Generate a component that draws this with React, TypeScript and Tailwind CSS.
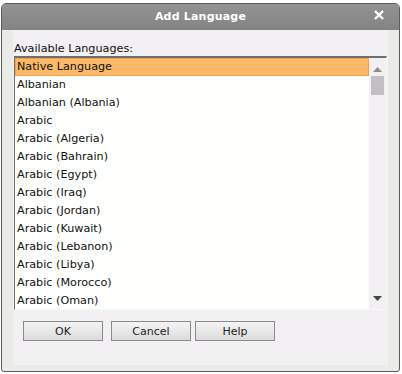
import React from 'react';

const languages = [
  'Native Language',
  'Albanian',
  'Albanian (Albania)',
  'Arabic',
  'Arabic (Algeria)',
  'Arabic (Bahrain)',
  'Arabic (Egypt)',
  'Arabic (Iraq)',
  'Arabic (Jordan)',
  'Arabic (Kuwait)',
  'Arabic (Lebanon)',
  'Arabic (Libya)',
  'Arabic (Morocco)',
  'Arabic (Oman)',
];

const Button = ({ label, className = '' }: { label: string; className?: string }) => (
  <button
    className={`w-[80px] h-[20px] border border-[#8a8a8a] bg-gradient-to-b from-[#f4f4f4] to-[#dcdcdc] text-[11px] text-[#222] leading-none ${className}`}
  >
    {label}
  </button>
);

const App = () => {
  return (
    <div className="w-[402px] h-[374px] bg-white pt-[3px] pl-[1px] pr-[2px] pb-[2px] font-['DejaVu_Sans',Verdana,sans-serif]">
      <div className="h-full flex flex-col border border-[#5c5c5c] rounded-t-[5px] rounded-b-[3px] bg-[#e9ebe7] overflow-hidden">
        {/* title bar */}
        <div className="h-[26px] shrink-0 flex items-center justify-center relative bg-gradient-to-b from-[#939393] to-[#838383]">
          <span className="text-white font-bold text-[11px] tracking-[0.2px]">Add Language</span>
          <span className="absolute right-[14px] top-[5px] text-white">
            <svg width="12" height="12" viewBox="0 0 12 12">
              <path d="M2 2 L10 10 M10 2 L2 10" stroke="white" strokeWidth="2.4" />
            </svg>
          </span>
        </div>

        <div className="flex-1 px-[11px] pb-[6px] flex">
          <div className="flex-1 bg-[#f2f0f3] flex flex-col px-[1px] pt-[12px]">
            <div className="text-[11.2px] text-[#111] leading-[13px]">Available Languages:</div>
            <div className="h-[254px] mt-[1px] border-t-2 border-l border-[#6e6e6e] border-r border-r-[#f8f8f8] border-b border-b-[#f8f8f8] bg-[#fdfffd] flex">
              <div className="flex-1">
                {languages.map((lang, i) => (
                  <div
                    key={lang}
                    className={
                      i === 0
                        ? 'h-[18px] flex items-center pl-[1px] text-[11.2px] text-[#111] bg-[#fdb96a] border border-[#f5a14a]'
                        : 'h-[18px] flex items-center pl-[2px] text-[11.2px] text-[#111]'
                    }
                  >
                    {lang}
                  </div>
                ))}
              </div>
              {/* scrollbar */}
              <div className="w-[17px] bg-[#f2f0f3] flex flex-col items-center">
                <svg width="9" height="5" viewBox="0 0 9 5" className="mt-[9px]">
                  <path d="M4.5 0 L9 5 L0 5 Z" fill="#8e8e8e" />
                </svg>
                <div className="w-[13px] h-[19px] bg-[#c1bfc4] mt-[4px]" />
                <div className="flex-1" />
                <svg width="9" height="5" viewBox="0 0 9 5" className="mb-[8px]">
                  <path d="M0 0 L9 0 L4.5 5 Z" fill="#3f4a3f" />
                </svg>
              </div>
            </div>
            <div className="flex pl-[9px] mt-[11px]">
              <Button label="OK" />
              <Button label="Cancel" className="ml-[8px]" />
              <Button label="Help" className="ml-[4px]" />
            </div>
          </div>
        </div>
      </div>
    </div>
  );
};

export default App;
